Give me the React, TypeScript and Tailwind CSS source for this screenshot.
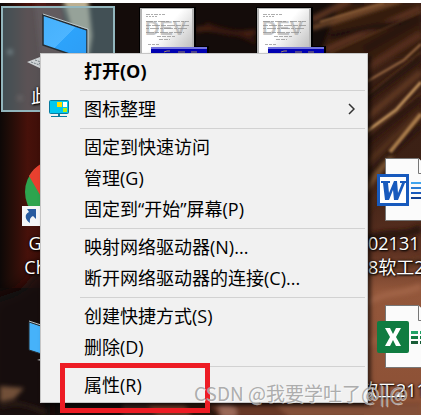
import React from "react";

type MenuItem = {
  label: string;
  bold?: boolean;
  icon?: boolean;
  submenu?: boolean;
};

const menuGroups: MenuItem[][] = [
  [{ label: "打开(O)", bold: true }],
  [{ label: "图标整理", icon: true, submenu: true }],
  [{ label: "固定到快速访问" }, { label: "管理(G)" }, { label: "固定到“开始”屏幕(P)" }],
  [{ label: "映射网络驱动器(N)..." }, { label: "断开网络驱动器的连接(C)..." }],
  [{ label: "创建快捷方式(S)" }, { label: "删除(D)" }],
  [{ label: "属性(R)" }],
];

const Wallpaper = () => (
  <svg
    className="absolute inset-0 h-full w-full"
    viewBox="0 3 421 412"
    preserveAspectRatio="none"
    aria-hidden="true"
  >
    <defs>
      <linearGradient id="left" x1="0" x2="1" y1="0" y2="0">
        <stop offset="0" stopColor="#0d0807" />
        <stop offset="0.25" stopColor="#240d08" />
        <stop offset="0.6" stopColor="#47110a" />
        <stop offset="1" stopColor="#3a0e08" />
      </linearGradient>
      <linearGradient id="hair" x1="0" x2="0" y1="0" y2="1">
        <stop offset="0" stopColor="#3a1f14" />
        <stop offset="0.4" stopColor="#3c2115" />
        <stop offset="0.6" stopColor="#5b3020" />
        <stop offset="0.7" stopColor="#93573b" />
        <stop offset="1" stopColor="#8c5035" />
      </linearGradient>
      <filter id="soft" x="-20%" y="-20%" width="140%" height="140%">
        <feGaussianBlur stdDeviation="2" />
      </filter>
      <filter id="fine" x="-20%" y="-20%" width="140%" height="140%">
        <feGaussianBlur stdDeviation="0.8" />
      </filter>
      <filter id="softer" x="-30%" y="-30%" width="160%" height="160%">
        <feGaussianBlur stdDeviation="8" />
      </filter>
    </defs>
    <rect width="421" height="415" fill="#140c0a" />
    <rect y="3" width="46" height="285" fill="url(#left)" />
    <g filter="url(#soft)">
      <path d="M34 3 H62 L72 56 H40 Z" fill="#54201b" />
      <path d="M62 -4 H88 L92 36 L88 60 H80 Z" fill="#bdb092" />
      <circle cx="10" cy="52" r="3" fill="#6c6461" />
      <circle cx="20" cy="98" r="3" fill="#5d3029" />
    </g>
    <path d="M-10 300 L20 290 L50 255 V420 H-10 Z" fill="#120b0a" filter="url(#softer)" />
    <rect x="364" y="3" width="57" height="412" fill="url(#hair)" />
    <g filter="url(#soft)" fill="none">
      <path d="M196 30 C215 24 230 38 256 32" stroke="#4a2114" strokeWidth="5" />
      <path d="M206 24 C222 32 236 30 256 42" stroke="#361710" strokeWidth="4" />
      <path d="M318 58 L340 3 H421 V58 Z" fill="#341a10" />
      <path d="M312 28 L400 0" stroke="#7d4f2e" strokeWidth="4" />
      <path d="M312 20 L350 0" stroke="#5d3521" strokeWidth="6" />
      <path d="M326 50 L421 8" stroke="#5f3521" strokeWidth="5" />
      <path d="M330 36 L421 18" stroke="#1c0f0a" strokeWidth="5" />
      <path d="M364 50 L421 18" stroke="#2b160e" strokeWidth="8" />
      <path d="M364 70 L421 34" stroke="#552e1c" strokeWidth="7" />
      <path d="M364 100 L421 58" stroke="#2a150d" strokeWidth="7" />
      <path d="M364 120 L421 72" stroke="#5f3722" strokeWidth="6" />
      <path d="M364 144 L421 98" stroke="#2d170e" strokeWidth="7" />
      <path d="M366 164 L421 112" stroke="#54301c" strokeWidth="5" />
      <path d="M366 176 L421 126" stroke="#2a160d" strokeWidth="5" />
      <path d="M366 190 C374 178 382 166 392 158" stroke="#8a6038" strokeWidth="4" />
      <path d="M366 212 L388 180" stroke="#4b2b1a" strokeWidth="5" />
      <path d="M364 240 C385 230 405 238 421 228" stroke="#2c170f" strokeWidth="8" />
      <path d="M364 274 C385 262 405 270 421 260" stroke="#54301f" strokeWidth="7" />
      <path d="M364 304 C388 290 402 296 421 286" stroke="#a06446" strokeWidth="6" />
      <path d="M364 344 C384 336 400 336 421 324" stroke="#985b3d" strokeWidth="8" />
      <path d="M0 386 L24 388 L14 399 L0 402 Z" fill="#715038" />
      <path d="M0 407 C18 400 30 407 46 412" stroke="#2b1a14" strokeWidth="4" />
    </g>
    <g filter="url(#fine)" fill="none">
      <path d="M320 22 L384 3" stroke="#8c5e39" strokeWidth="2" />
      <path d="M330 53 L421 12" stroke="#66402a" strokeWidth="1" />
      <path d="M366 82 L404 60 L421 44" stroke="#a5724a" strokeWidth="2" />
      <path d="M366 96 L421 52" stroke="#6c422b" strokeWidth="1" />
      <path d="M366 132 L396 110 L421 82" stroke="#c0915c" strokeWidth="3" />
      <path d="M366 138 L421 93" stroke="#66402a" strokeWidth="1" />
      <path d="M390 152 L421 114" stroke="#a97c4b" strokeWidth="4" />
    </g>
    <g filter="url(#soft)">
      <path d="M122 403 H421 V418 H122 Z" fill="#683727" />
      <path d="M122 404 H148 L158 418 H122 Z" fill="#34201a" />
      <path d="M184 404 H210 L222 418 H192 Z" fill="#2a1511" />
      <path d="M218 405 C235 402 240 410 235 418 H222 Z" fill="#9a6857" />
      <path d="M275 404 H421 V418 H290 Z" fill="#835039" />
    </g>
  </svg>
);

const ComputerIcon = () => (
  <svg width="64" height="64" viewBox="0 -3 64 64" aria-hidden="true">
    <defs>
      <linearGradient id="screen" x1="0" y1="0" x2="1" y2="1">
        <stop offset="0" stopColor="#45b0fb" />
        <stop offset="0.5" stopColor="#4db5ff" />
        <stop offset="0.5" stopColor="#2da3fb" />
        <stop offset="1" stopColor="#2d9df5" />
      </linearGradient>
    </defs>
    <path d="M17 1 L61 16 V46 L17 31 Z" fill="url(#screen)" stroke="#262c30" strokeWidth="1.5" />
    <path d="M17 0 L62 15 V46" fill="none" stroke="#b9c5c9" strokeWidth="1" />
    <path d="M1 48 L14 43 L36 51 L22 58 Z" fill="#ced3d5" />
    <path d="M5 48 L25 55 M9 46 L29 53 M13 50 L18 44" stroke="#778186" strokeWidth="1" strokeDasharray="2 1" />
  </svg>
);

const NetworkIcon = () => (
  <svg width="60" height="64" viewBox="0 0 60 64" aria-hidden="true">
    <path d="M1 17 L48 33 V60 L1 45 Z" fill="#46b2fa" stroke="#262c30" />
    <path d="M1 16 L49 32" stroke="#b9c5c9" />
    <path d="M9 55 L16 53 L20 57 Z" fill="#ced3d5" />
  </svg>
);

const DevIcon = () => (
  <svg className="-mt-1" width="72" height="64" viewBox="0 4 72 64" aria-hidden="true">
    <defs>
      <linearGradient id="paper" x1="0" y1="0" x2="1" y2="1">
        <stop offset="0.4" stopColor="#ffffff" />
        <stop offset="1" stopColor="#a5a5a5" />
      </linearGradient>
    </defs>
    <path d="M0 4 H57 V43 H70 V68 H0 Z" fill="#000" />
    <rect x="1" y="5" width="54" height="60" fill="#b4b4b4" />
    <rect x="3" y="6" width="50" height="60" fill="url(#paper)" />
    <text
      x="6"
      y="32"
      fill="#999"
      fillOpacity="0.55"
      className="font-['Liberation_Sans'] text-xl font-bold"
    >
      DEV
    </text>
    <g stroke="#8c8c8c" strokeWidth="1" strokeOpacity="0.7">
      <path d="M7 11.500 H26" strokeDasharray="4 1 2 1" />
      <path d="M7 13.500 H18" strokeDasharray="2 1" />
      <path d="M7 18.500 H30 M34 18.500 H50" strokeDasharray="7 1 3 1" />
      <path d="M7 22.500 H50" strokeDasharray="5 1 8 1" />
      <path d="M7 25.500 H49" strokeDasharray="3 1 9 1" />
      <path d="M7 29.500 H45" strokeDasharray="8 1 4 1" />
      <path d="M18 33.500 H36 M20 36.500 H31" strokeDasharray="4 1" />
      <path d="M9 41.500 H20" strokeDasharray="3 1" />
    </g>
    <rect x="12" y="44" width="56" height="24" fill="#0202b4" />
    <rect x="12" y="44" width="56" height="2" fill="#7373dc" />
    <path d="M25 49 L28 48 H31 M39 49 H46 M52 49 H58" stroke="#a18a64" fill="none" />
  </svg>
);

const ChromeIcon = () => (
  <svg width="72" height="68" viewBox="0 0 72 68" aria-hidden="true">
    <circle cx="35" cy="34" r="32" fill="#2da44e" />
    <path d="M7 18 A32 32 0 0 1 63 18 L35 18 L21 42 Z" fill="#e8402f" />
    <path d="M63 18 A32 32 0 0 1 35 66 L49 42 L35 18 Z" fill="#fbc116" />
    <circle cx="35" cy="34" r="14" fill="#4285f4" stroke="#fff" strokeWidth="3" />
    <rect y="48" width="20" height="20" fill="#f4f5f6" />
    <path d="M5 51 H14 V61 L11 58 C7 60 8 63 8 65 C3 62 2 56 7 54 Z" fill="#285b9f" />
  </svg>
);

const OfficeIcon = ({ kind }: { kind: "word" | "excel" }) => (
  <svg width="64" height="64" viewBox="0 0 64 64" aria-hidden="true">
    <path d="M8.500 .5 H41.500 L57.500 15.500 V62.500 H8.500 Z" fill="#fbfbfb" stroke="#777" />
    <path d="M41.500 .5 V15.500 H57.500" fill="#fbfbfb" stroke="#777" />
    {kind === "word" ? (
      <>
        <path d="M34 25 H52" stroke="#41a5ee" strokeWidth="2" />
        <path d="M34 30 H52" stroke="#2b7cd3" strokeWidth="2" />
        <path d="M34 35 H52" stroke="#185abd" strokeWidth="2" />
        <path d="M34 40 H52" stroke="#103f91" strokeWidth="2" />
        <rect y="16" width="32" height="32" fill="#185abd" />
        <rect x="3" y="19" width="26" height="26" fill="#fff" />
        <path
          d="M4 23 H13 V25 H11 L12 35 L17 23 H20 L21 35 L25 25 H23 V23 H29 V25 H28 L21 42 H17 L16 32 L12 42 H8 L6 25 H4 Z"
          fill="#185abd"
        />
      </>
    ) : (
      <>
        <path d="M34 27.500 H41 M43 27.500 H52" stroke="#21a366" strokeWidth="3" />
        <path d="M34 32.500 H41 M43 32.500 H52" stroke="#107c41" strokeWidth="3" />
        <path d="M34 37.500 H41 M43 37.500 H52" stroke="#185c37" strokeWidth="3" />
        <rect y="16" width="32" height="32" rx="2" fill="#107c41" />
        <path
          d="M8 23 H13 L16 29 L19 23 H24 L19 32 L24 41 H19 L16 35 L13 41 H8 L13 32 Z"
          fill="#fff"
        />
      </>
    )}
  </svg>
);

const ArrangeIcon = () => (
  <svg width="20" height="18" viewBox="0 0 20 18" aria-hidden="true">
    <rect x="0.500" y="0.500" width="19" height="13" rx="1" fill="#00c8f0" stroke="#087a9e" />
    <rect x="8" y="2" width="5" height="5" fill="#ffde00" />
    <rect x="14" y="2" width="4" height="5" fill="#fff" />
    <rect x="14" y="8" width="4" height="4" fill="#b5ee10" />
    <rect x="9" y="14" width="2" height="2" fill="#087a9e" />
    <rect x="2" y="16" width="16" height="1" fill="#087a9e" />
  </svg>
);

type DesktopIconProps = {
  icon: React.ReactNode;
  label?: React.ReactNode;
  name?: string;
  selected?: boolean;
  labelClass?: string;
};

const DesktopIcon = ({ icon, label, name, selected, labelClass = "text-center" }: DesktopIconProps) => (
  <button
    type="button"
    aria-label={name}
    className={`flex h-[106px] w-[114px] flex-col items-center border-2 pt-[3px] ${
      selected ? "border-[#92b6bd] bg-[#6f939f]/50" : "border-transparent"
    }`}
  >
    <span className="flex h-16 shrink-0 items-start">{icon}</span>
    <span
      className={`mt-[9px] w-full text-lg leading-6 whitespace-nowrap text-white [text-shadow:1px_1px_2px_#000,0_0_3px_#000] ${labelClass}`}
    >
      {label}
    </span>
  </button>
);

const ContextMenu = () => (
  <div
    role="menu"
    className="absolute left-10 right-[53px] top-[50px] border border-[#c6c6c6] bg-[#f1f1f1] pt-px pb-0.5 shadow-[3px_3px_4px_rgba(0,0,0,0.6)]"
  >
    {menuGroups.map((group, i) => (
      <div key={i}>
        {i > 0 && <div role="separator" className="mt-1 mb-0.5 mr-0.5 ml-[39px] h-px bg-[#d2d2d2]" />}
        {group.map((item) => (
          <button
            key={item.label}
            type="button"
            role="menuitem"
            className="flex h-[31px] w-full items-center pr-3 text-left text-lg text-black hover:bg-white"
          >
            <span className="flex w-[43px] shrink-0 pl-2">{item.icon && <ArrangeIcon />}</span>
            <span className={item.bold ? "grow font-bold" : "grow"}>{item.label}</span>
            {item.submenu && (
              <svg width="7" height="12" viewBox="0 0 7 12" aria-hidden="true">
                <path d="M1 1 L6 6 L1 11" fill="none" stroke="#333" strokeWidth="1.500" />
              </svg>
            )}
          </button>
        ))}
      </div>
    ))}
  </div>
);

const App = () => {
  return (
    <div className="flex min-h-screen flex-col bg-white pt-[3px] pr-0.5 font-['Open_Sans','Noto_Sans_CJK_SC',sans-serif]">
      <main className="relative grow overflow-hidden">
        <Wallpaper />

        {/* desktop icons, column by column */}
        <div className="relative grid grid-flow-col grid-cols-[repeat(4,117px)] grid-rows-[147px_147px_auto] pt-[3px] pl-px">
          <DesktopIcon icon={<ComputerIcon />} label="此电脑" selected />
          <DesktopIcon
            icon={<ChromeIcon />}
            label={
              <>
                Google
                <br />
                Chrome
              </>
            }
          />
          <DesktopIcon icon={<NetworkIcon />} name="网络" />
          <div className="row-span-3">
            <DesktopIcon icon={<DevIcon />} name="Dev" />
          </div>
          <div className="row-span-3">
            <DesktopIcon icon={<DevIcon />} name="Dev" />
          </div>
          <div />
          <DesktopIcon
            icon={<OfficeIcon kind="word" />}
            labelClass="pl-3.5 text-left"
            label={
              <>
                02131
                <br />
                8软工2
              </>
            }
          />
          <DesktopIcon
            icon={<OfficeIcon kind="excel" />}
            labelClass="pl-1.5 text-left"
            label="软工211"
          />
        </div>

        <ContextMenu />

        {/* highlight around the properties entry */}
        <div className="pointer-events-none absolute left-[60px] top-[360px] h-[50px] w-[150px] border-5 border-[#ed1c24]" />
        <p className="pointer-events-none absolute left-[194px] top-[376px] whitespace-nowrap font-['Noto_Sans_CJK_SC',sans-serif] text-[19px] leading-7 text-[#a4a4a4]/90 [text-shadow:1px_1px_0_#ffffff99]">
          CSDN @我要学吐了@||@
        </p>
      </main>
    </div>
  );
};

export default App;
